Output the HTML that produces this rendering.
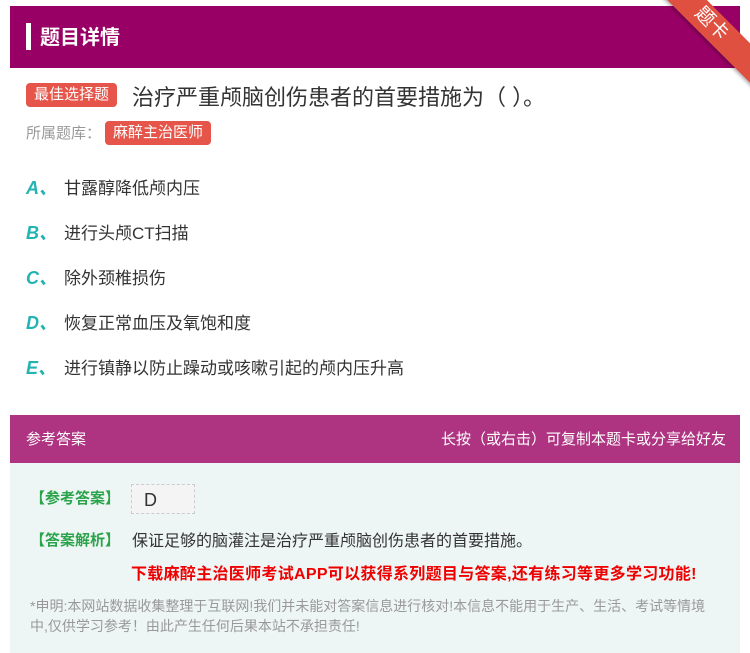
<!DOCTYPE html>
<html><head><meta charset="utf-8"><style>
body{margin:0;width:750px;height:653px;background:#fff;font-family:"Liberation Sans","Noto Sans CJK SC",sans-serif;position:relative;overflow:hidden}
.hdr{position:absolute;left:10px;top:6px;width:730px;height:62px;background:#990066}
.hdr .bar{position:absolute;left:16px;top:17px;width:5px;height:27px;background:#fff}
.hdr .t{position:absolute;left:30px;top:15px;color:#fff;font-size:20px;font-weight:bold}
.rib{position:absolute;right:-36px;top:10px;width:150px;height:28px;background:#e05040;color:#fff;transform:rotate(45deg);text-align:center;font-size:19px;line-height:28px;box-shadow:0 2px 3px rgba(0,0,0,.3)}
.tag{position:absolute;background:#e5554a;color:#fff;border-radius:4px;font-size:15px;padding:0 8px;line-height:24px}
.q{position:absolute;left:132px;top:80px;font-size:22px;color:#333}
.lib{position:absolute;left:26px;top:122px;font-size:15px;color:#999}
.opt{position:absolute;left:26px;font-size:17px;color:#333}
.opt b{color:#22b3b3;font-style:italic;display:inline-block;width:38px;font-size:18px}
.ah{position:absolute;left:10px;top:415px;width:730px;height:48px;background:#ae3482;color:#fff;font-size:15px}
.ab{position:absolute;left:10px;top:463px;width:730px;height:190px;background:#eef6f5}
.g{color:#2aa34a;font-weight:bold;font-size:15px}
</style></head><body>
<div class="hdr"><div class="bar"></div><div class="t">题目详情</div></div>
<div class="rib">题卡</div>
<div class="tag" style="left:26px;top:83px">最佳选择题</div>
<div class="q">治疗严重颅脑创伤患者的首要措施为（ ）。</div>
<div class="lib">所属题库：</div>
<div class="tag" style="left:105px;top:121px">麻醉主治医师</div>
<div class="opt" style="top:174px"><b>A、</b>甘露醇降低颅内压</div>
<div class="opt" style="top:219px"><b>B、</b>进行头颅CT扫描</div>
<div class="opt" style="top:264px"><b>C、</b>除外颈椎损伤</div>
<div class="opt" style="top:309px"><b>D、</b>恢复正常血压及氧饱和度</div>
<div class="opt" style="top:354px"><b>E、</b>进行镇静以防止躁动或咳嗽引起的颅内压升高</div>
<div class="ah"><span style="position:absolute;left:16px;top:13px">参考答案</span><span style="position:absolute;right:14px;top:13px">长按（或右击）可复制本题卡或分享给好友</span></div>
<div class="ab">
<div style="position:absolute;left:20px;top:24px" class="g">【参考答案】</div>
<div style="position:absolute;left:121px;top:21px;width:64px;height:30px;background:#f4f4f4;border:1px dashed #ccc;font-size:18px;color:#333;line-height:30px;padding-left:12px;box-sizing:border-box">D</div>
<div style="position:absolute;left:20px;top:66px" class="g">【答案解析】</div>
<div style="position:absolute;left:122px;top:64px;font-size:16px;color:#333">保证足够的脑灌注是治疗严重颅脑创伤患者的首要措施。</div>
<div style="position:absolute;left:121px;top:97px;font-size:16px;color:#e00;font-weight:bold;letter-spacing:.3px">下载麻醉主治医师考试APP可以获得系列题目与答案,还有练习等更多学习功能!</div>
<div style="position:absolute;left:20px;top:133px;width:690px;font-size:14px;color:#999;line-height:20px">*申明:本网站数据收集整理于互联网!我们并未能对答案信息进行核对!本信息不能用于生产、生活、考试等情境中,仅供学习参考！由此产生任何后果本站不承担责任!</div>
</div>
</body></html>
